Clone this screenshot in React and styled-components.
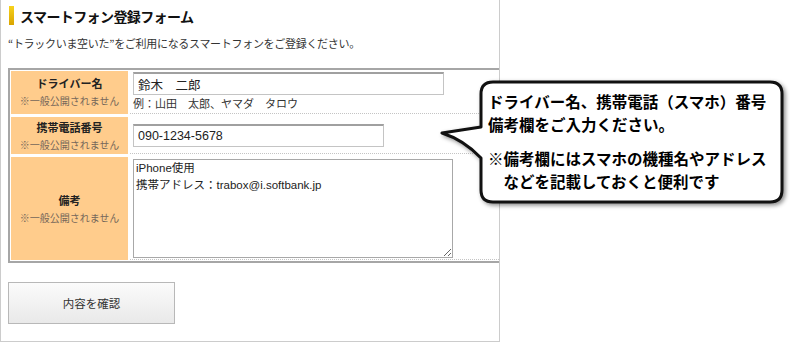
import React from 'react';
import styled, { createGlobalStyle } from 'styled-components';

const GlobalStyle = createGlobalStyle`
  body {
    margin: 0;
    background: #fff;
    font-family: "Noto Sans CJK JP", "Liberation Sans", sans-serif;
    color: #222;
  }
`

const Page = styled.div`
  position: relative;
  width: 790px;
  height: 350px;
  overflow: hidden;
  background: #fff;
`

const Panel = styled.section`
  width: 500px;
  height: 342px;
  box-sizing: border-box;
  border: 1px solid #ccc;
  border-top: none;
  padding-top: 6px;
`

const Heading = styled.h2`
  display: flex;
  align-items: center;
  margin: 0 0 0 8px;
  height: 19px;
  font-size: 14px;
  font-weight: bold;
  letter-spacing: -0.6px;
  color: #111;

  &::before {
    content: '';
    flex: none;
    width: 5px;
    height: 19px;
    margin-right: 6px;
    background: linear-gradient(to bottom, #f7d21c, #d9a400);
  }
`

const Intro = styled.p`
  margin: 10px 0 0 7px;
  font-size: 11px;
  line-height: 16px;
  letter-spacing: -0.3px;
  color: #333;
`

const Table = styled.div`
  margin: 17px 0 0 7px;
  border: 2px solid #a6a6a6;
  border-right: none;
  padding: 1px 0 1px 1px;
  display: grid;
  row-gap: 3px;
`

const Row = styled.div`
  display: grid;
  grid-template-columns: 117px 1fr;
  column-gap: 2px;
  height: ${props => props.h}px;
`

const Label = styled.div`
  background: #ffcc8c;
  display: flex;
  flex-direction: column;
  align-items: center;
  justify-content: center;
  padding-bottom: ${props => props.shift || 0}px;
`

const LabelTitle = styled.span`
  font-size: 11px;
  font-weight: bold;
  line-height: 18px;
  color: #222;
`

const LabelNote = styled.span`
  font-size: 10px;
  line-height: 18px;
  color: #75675a;
`

const Value = styled.div`
  border-bottom: 1px dotted #c4c4c4;
  padding: ${props => props.pad || '1px 0 0 3px'};
  display: flex;
  flex-direction: column;
  justify-content: ${props => props.center ? 'center' : 'flex-start'};
`

const Input = styled.input`
  box-sizing: border-box;
  width: ${props => props.w}px;
  height: 23px;
  margin: 0;
  padding: 0 4px;
  border: 1px solid #c4c4c4;
  border-top: 2px solid #a0a0a0;
  font-family: "Liberation Sans", "Noto Sans CJK JP", sans-serif;
  font-size: 12.5px;
  color: #222;
  outline: none;
`

const Example = styled.div`
  margin-top: 1px;
  font-size: 11px;
  line-height: 14px;
  color: #333;
`

const Memo = styled.textarea`
  box-sizing: border-box;
  width: 320px;
  height: 99px;
  margin: 0;
  padding: 0 2px;
  border: 1px solid #a8a8a8;
  font-family: "Liberation Sans", "Noto Sans CJK JP", sans-serif;
  font-size: 11.5px;
  line-height: 17px;
  color: #222;
  outline: none;
`

const ConfirmButton = styled.button`
  display: block;
  margin: 19px 0 0 7px;
  width: 167px;
  height: 42px;
  border: 1px solid #b8b8b8;
  background: linear-gradient(to bottom, #fbfbfb, #e9e9e9);
  font-family: "Noto Sans CJK JP", sans-serif;
  font-size: 11.5px;
  color: #333;
  cursor: pointer;
`

const Bubble = styled.div`
  position: absolute;
  left: 440px;
  top: 80px;
  width: 345px;
  height: 126px;
`

const BubbleShape = styled.svg`
  position: absolute;
  left: 0;
  top: 0;
  filter: drop-shadow(2px 2px 2px rgba(0, 0, 0, 0.45));
`

const BubbleText = styled.div`
  position: relative;
  padding: 10px 0 0 48px;
  font-size: 15.5px;
  font-weight: bold;
  line-height: 23px;
  color: #000;
  white-space: nowrap;

  p {
    margin: 0;
  }

  p + p {
    margin-top: 11px;
    padding-left: 1em;
    text-indent: -1em;
  }
`

const App = () => {

  return <>
    <GlobalStyle />
    <Page>
      <Panel>
        <Heading>スマートフォン登録フォーム</Heading>
        <Intro>“トラックいま空いた”をご利用になるスマートフォンをご登録ください。</Intro>

        <Table>
          <Row h={43}>
            <Label shift={2}>
              <LabelTitle>ドライバー名</LabelTitle>
              <LabelNote>※一般公開されません</LabelNote>
            </Label>
            <Value>
              <Input w={311} defaultValue="鈴木　二郎" />
              <Example>例：山田　太郎、ヤマダ　タロウ</Example>
            </Value>
          </Row>

          <Row h={37}>
            <Label>
              <LabelTitle>携帯電話番号</LabelTitle>
              <LabelNote>※一般公開されません</LabelNote>
            </Label>
            <Value center pad="0 0 0 3px">
              <Input w={251} defaultValue="090-1234-5678" />
            </Value>
          </Row>

          <Row h={103}>
            <Label>
              <LabelTitle>備考</LabelTitle>
              <LabelNote>※一般公開されません</LabelNote>
            </Label>
            <Value pad="2px 0 0 3px">
              <Memo defaultValue={'iPhone使用\n携帯アドレス：trabox@i.softbank.jp'} />
            </Value>
          </Row>
        </Table>

        <ConfirmButton>内容を確認</ConfirmButton>
      </Panel>

      {/* 吹き出し */}
      <Bubble>
        <BubbleShape width="345" height="126" viewBox="0 0 345 126">
          <path
            d="M53 2 H330 Q342 2 342 14 V110 Q342 122 330 122 H53 Q41 122 41 110 V78 Q24 60 2 53 L41 47 V14 Q41 2 53 2 Z"
            fill="#fff"
            stroke="#111"
            strokeWidth="3"
            strokeLinejoin="round"
          />
        </BubbleShape>
        <BubbleText>
          <p>ドライバー名、携帯電話（スマホ）番号<br />備考欄をご入力ください。</p>
          <p>※備考欄にはスマホの機種名やアドレス<br />などを記載しておくと便利です</p>
        </BubbleText>
      </Bubble>
    </Page>
  </>
}

export default App;
